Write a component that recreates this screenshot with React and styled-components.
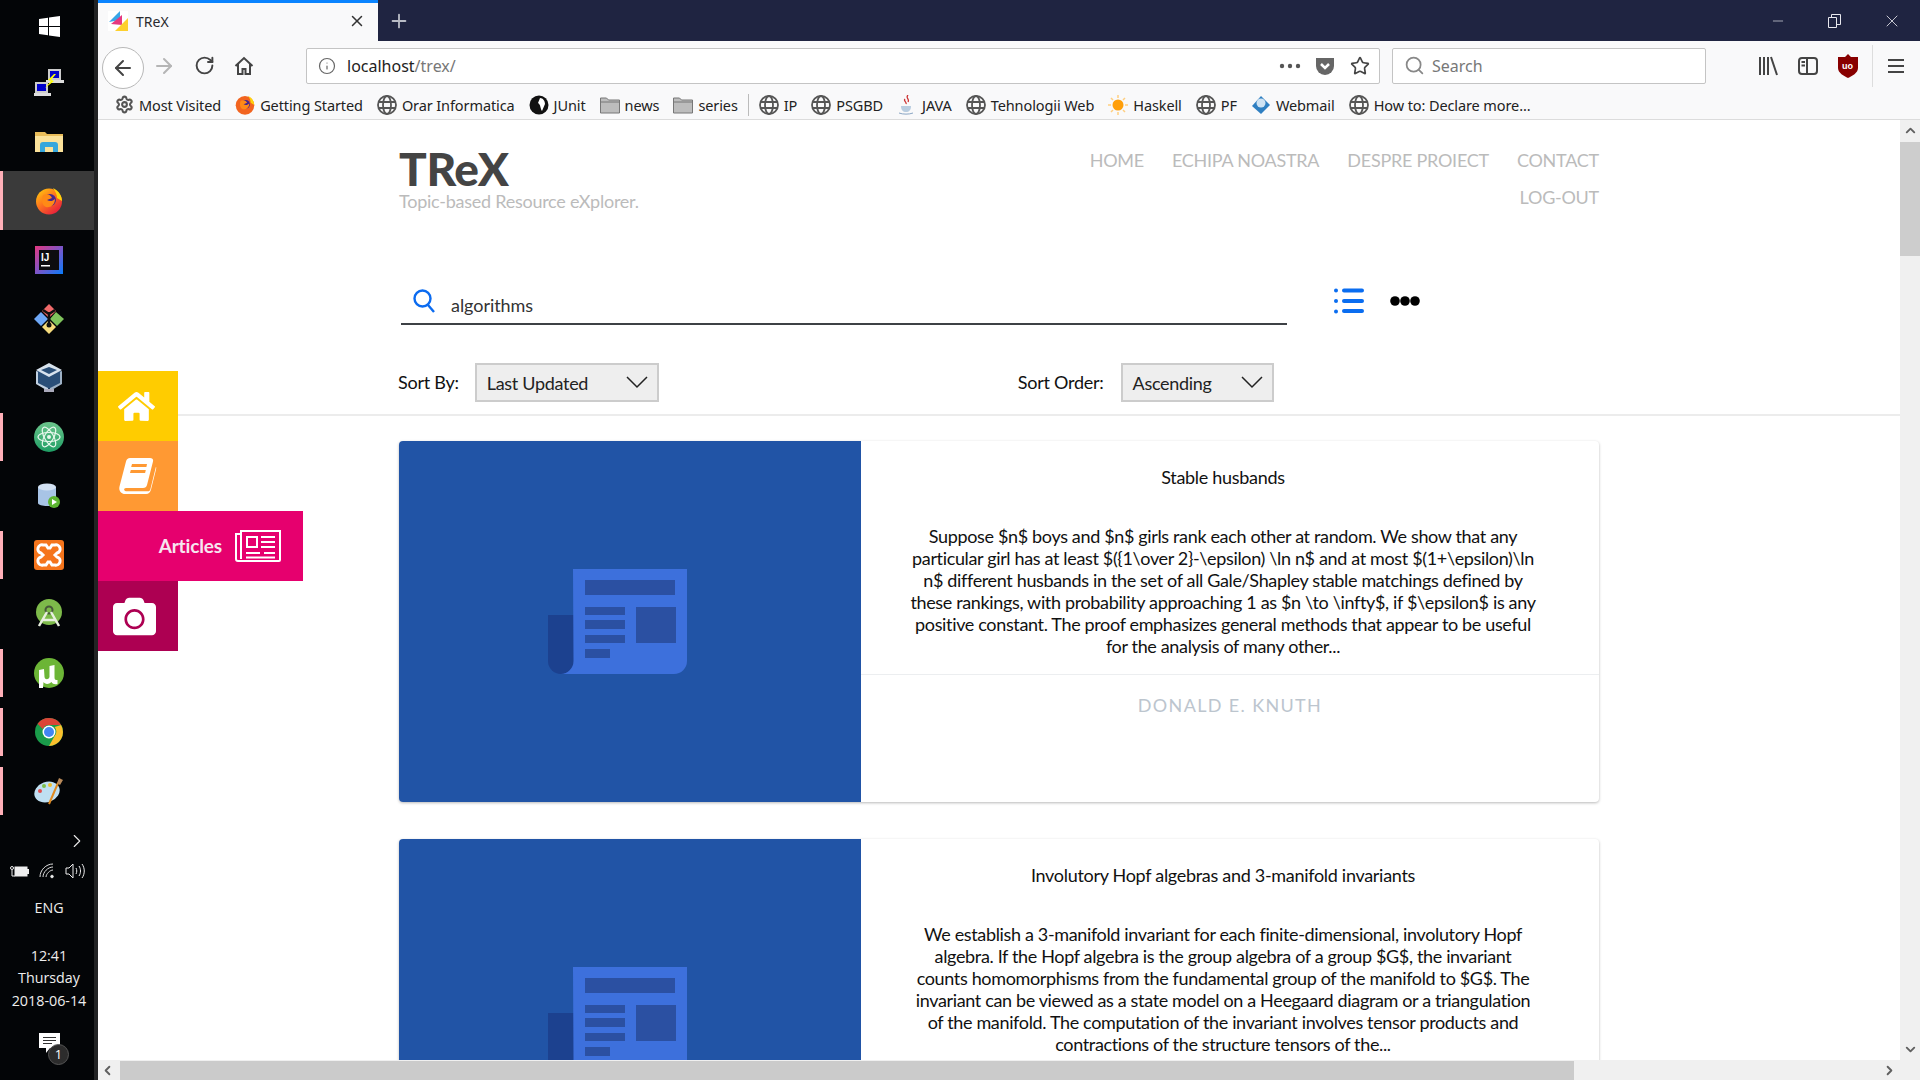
import React from 'react';
import styled, { createGlobalStyle } from 'styled-components';
import { FaHome, FaCamera } from 'react-icons/fa';
import { ArrowLeft, ArrowRight, RotateCw, Info, Star, Search, Minus, X, Plus, Settings, ChevronRight, ChevronDown, ChevronLeft, ChevronUp } from 'lucide-react';

const Global = createGlobalStyle`
  html, body { margin: 0; padding: 0; background: #000; overflow: hidden; }
  * { box-sizing: border-box; }
  #root { width: 1920px; height: 1080px; }
`;

const Desktop = styled.div`
  width: 1920px; height: 1080px; display: flex; overflow: hidden;
  font-family: Lato, "Liberation Sans", sans-serif;
`;

/* ---------- Windows taskbar ---------- */
const Taskbar = styled.aside`
  width: 98px; height: 1080px; flex: none; background: #030507;
  border-right: 4px solid #222324; display: flex; flex-direction: column; align-items: stretch;
`;
const Slot = styled.div`
  height: ${p => p.$h || 59}px; flex: none; display: flex; align-items: center; justify-content: center;
  position: relative; padding-left: 4px; background: ${p => (p.$active ? '#3a3a3a' : 'transparent')};
  ${p => p.$open ? `&::before { content: ''; position: absolute; left: 0; top: 6px; bottom: 5px; width: 3px; background: #ffb0b8; }` : ''}
  ${p => p.$active ? `&::before { top: 0; bottom: 0; }` : ''}
`;
const TrayChevron = styled.div`
  height: 22px; margin-top: 10px; display: flex; justify-content: flex-end; padding-right: 6px; color: #e8e8e8;
`;
const Tray = styled.div`
  display: flex; align-items: center; justify-content: center; gap: 10px; height: 24px; margin-top: 7px; color: #e8e8e8;
`;
const TrayText = styled.div`
  font-family: "Open Sans", "Noto Sans", sans-serif; font-size: 14.3px; color: #eee; text-align: center; padding-left: 4px;
  line-height: 22.5px; margin-top: ${p => p.$mt || 0}px; white-space: nowrap;
`;
const Notif = styled.div`
  margin-top: 21px; height: 36px; position: relative; display: flex; justify-content: center; padding-left: 4px;
`;
const NotifBadge = styled.span`
  position: absolute; left: 48px; top: 11px; width: 21px; height: 21px; border-radius: 50%;
  background: #2c2c2c; border: 1px solid #555; color: #fff; font: 13px/19px "Open Sans", sans-serif; text-align: center;
`;

/* ---------- Browser chrome ---------- */
const Browser = styled.div`
  width: 1822px; height: 1080px; flex: none; display: flex; flex-direction: column; background: #fff;
`;
const TitleBar = styled.div`
  height: 41px; flex: none; background: #1f2441; display: flex; align-items: stretch;
`;
const Tab = styled.div`
  width: 280px; background: #f9f9fa; border-top: 3px solid #0a84ff; display: flex; align-items: center;
  padding: 0 12px 2px 10px; color: #333; font-family: "Noto Sans", sans-serif; font-size: 14px;
`;
const TabTitle = styled.span` margin-left: 8px; flex: 1; color: #2a2a2e; `;
const NewTab = styled.div`
  width: 42px; display: flex; align-items: center; justify-content: center; color: #b9bcc6;
`;
const WinControls = styled.div`
  margin-left: auto; display: flex; align-items: center; color: #e8e8ee;
`;
const WinBtn = styled.div`
  width: 57px; display: flex; justify-content: center; align-items: center;
`;
const NavBar = styled.div`
  height: 49px; flex: none; background: #f9f9fa; display: flex; align-items: center; padding-left: 4px;
`;
const BackCircle = styled.div`
  width: 42px; height: 42px; border-radius: 50%; border: 1px solid #b8b8b8; background: #fff; flex: none;
  display: flex; align-items: center; justify-content: center; color: #444; margin-top: 4px;
`;
const NavBtn = styled.div`
  width: 40px; display: flex; justify-content: center; flex: none; color: ${p => p.$dim ? '#b5b5b5' : '#444'};
`;
const UrlBox = styled.div`
  height: 36px; background: #fff; border: 1px solid #c4c4c4; border-radius: 2px; display: flex; align-items: center;
  flex: none; width: ${p => p.$w}px; margin-left: ${p => p.$ml || 0}px; padding: 0 2px 0 11px;
  font-family: "Noto Sans", sans-serif; font-size: 16px; color: #222;
`;
const UrlText = styled.span` margin-left: 11px; flex: 1; i { font-style: normal; color: #777; } `;
const UrlIcon = styled.span` width: ${p => p.$w || 35}px; display: flex; justify-content: center; color: #555; `;
const Placeholder = styled.span` color: #777; margin-left: 7px; `;
const ToolIcons = styled.div`
  display: flex; align-items: center; margin-left: 42px; color: #444;
`;
const ToolIcon = styled.div` width: 40px; display: flex; justify-content: center; `;
const ToolSep = styled.div` width: 1px; height: 42px; background: #ddd; margin: 0 3px 0 4px; `;
const Bookmarks = styled.div`
  height: 30px; flex: none; background: #f9f9fa; border-bottom: 1px solid #dcdcdc; display: flex; align-items: center;
  padding-left: 17px; font-family: "Noto Sans", sans-serif; font-size: 14.5px; color: #1c1c1c;
`;
const Mark = styled.div`
  display: flex; align-items: center; gap: 5px; margin-right: ${p => p.$mr ?? 14}px; white-space: nowrap; letter-spacing: -.1px; color: #222;
`;
const MarkSep = styled.div` width: 1px; height: 22px; background: #bbb; margin: 0 10px 0 0; `;

/* ---------- Page ---------- */
const Viewport = styled.div` flex: 1; display: flex; min-height: 0; `;
const Page = styled.main`
  flex: 1; position: relative; overflow: hidden; background: #fff; min-width: 0;
`;
const Header = styled.header`
  padding-left: 301px; width: 1501px; height: 169px; display: flex; justify-content: space-between; align-items: flex-start;
`;
const Brand = styled.div` padding-top: 27px; `;
const Logo = styled.h1`
  margin: 0; font-size: 46px; line-height: 44px; font-weight: 900; color: #444; letter-spacing: -.4px;
`;
const Tagline = styled.p`
  margin: 0; font-size: 18px; line-height: 21px; color: #bbb; letter-spacing: -.25px;
`;
const Nav = styled.nav`
  width: 520px; display: flex; flex-wrap: wrap; justify-content: flex-end; column-gap: 28px; padding-top: 22px;
`;
const NavLink = styled.a`
  font-size: 18px; line-height: 37px; color: #bbb; letter-spacing: -.25px; text-transform: uppercase;
`;
const SearchRow = styled.div`
  padding-left: 303px; display: flex; align-items: flex-start; height: 74px;
`;
const SearchField = styled.div`
  width: 886px; height: 36px; border-bottom: 2px solid #3d4145; display: flex; align-items: flex-start; padding-left: 12px;
  color: #0b6bf0;
`;
const SearchValue = styled.span`
  margin-left: 16px; padding-top: 5px; font-size: 18px; color: #333; letter-spacing: -.05px;
`;
const ListBtn = styled.div` margin-left: 47px; margin-top: -1px; `;
const DotsBtn = styled.div` margin-left: 26px; margin-top: 1px; `;
const SortRow = styled.div`
  margin-left: 0; padding: 0 0 13px 300px; width: 100%; height: 53px; border-bottom: 2px solid #ececec; display: flex; align-items: flex-start;
`;
const SortLabel = styled.span`
  font-size: 18px; line-height: 39px; color: #111; letter-spacing: -.25px; margin-left: ${p => p.$ml || 0}px;
`;
const Select = styled.div`
  width: ${p => p.$w}px; height: 39px; margin-left: ${p => p.$ml}px; background: #eee; border: 2px solid #ccc;
  display: flex; align-items: center; justify-content: space-between; padding: 0 9px 0 ${p => p.$pl}px;
  font-size: 18px; color: #222; letter-spacing: -.3px;
`;
const List = styled.div`
  padding: 25px 0 0 301px; width: 1501px; display: flex; flex-direction: column; gap: 37px;
`;
const Card = styled.article`
  height: 361px; flex: none; display: flex; background: #fff; border-radius: 4px; overflow: hidden;
  box-shadow: 0 1px 3px rgba(0,0,0,.28);
`;
const Thumb = styled.div`
  width: 462px; flex: none; background: #2154a6; display: flex; align-items: center; justify-content: center; padding-right: 25px;
`;
const CardBody = styled.div` flex: 1; display: flex; flex-direction: column; min-width: 0; `;
const CardMain = styled.div`
  height: 234px; border-bottom: 1px solid #eceef0; padding: 25px 61px 0 47px; text-align: center; color: #111;
`;
const CardTitle = styled.h3`
  margin: 0; font-size: 18px; line-height: 22px; font-weight: 400; letter-spacing: -.3px;
`;
const CardText = styled.p`
  margin: 37px 0 0; font-size: 18px; line-height: 22px; letter-spacing: -.35px;
`;
const Author = styled.div`
  padding: 19px 0 0 0; font-size: 18px; line-height: 22px; text-align: center; color: #bcc5ce; letter-spacing: 1.35px;
`;
const Rail = styled.nav`
  position: absolute; left: 0; top: 251px; display: flex; flex-direction: column; align-items: flex-start;
`;
const RailItem = styled.div`
  height: 70px; width: ${p => p.$w || 80}px; background: ${p => p.$bg}; color: #fff; display: flex; align-items: center;
  justify-content: ${p => p.$open ? 'flex-end' : 'center'}; padding-right: ${p => p.$pr ?? 0}px; gap: 13px;
`;
const RailLabel = styled.span` font-size: 19px; font-weight: 700; color: #f6e6f0; letter-spacing: -.15px; margin-bottom: 1px; `;
const VScroll = styled.div`
  width: 20px; flex: none; background: #f0f0f0; display: flex; flex-direction: column; align-items: center; color: #606060;
`;
const Thumbbar = styled.div`
  width: 20px; height: 114px; background: #cdcdcd; margin-top: 1px;
`;
const ScrollArrow = styled.div`
  height: 21px; display: flex; align-items: center; justify-content: center; flex: none; margin-top: ${p => p.$auto ? 'auto' : 0};
`;
const HScroll = styled.div`
  height: 20px; flex: none; background: #f0f0f0; display: flex; align-items: center; color: #606060;
`;
const HArrow = styled.div`
  width: 22px; flex: none; display: flex; align-items: center; justify-content: center; padding-right: 4px; margin-left: ${p => p.$auto ? 'auto' : 0};
`;
const HThumb = styled.div` width: 1454px; height: 19px; background: #cbcbcb; `;
const Corner = styled.div` width: 18px; `;

/* ---------- Drawn icons ---------- */
const Win = () => <svg width="21" height="21" viewBox="0 0 21 21"><path fill="#fff" d="M0 3l9-1.3V10H0zM10 1.5L21 0v10H10zM0 11h9v8.3L0 18zM10 11h11v10l-11-1.5z"/></svg>;
const Putty = () => <svg width="30" height="30" viewBox="0 0 30 30"><rect x="14" y="1" width="13" height="11" fill="#ccc"/><rect x="16" y="3" width="9" height="7" fill="#00c"/><rect x="12" y="12" width="18" height="3" fill="#ddd"/><rect x="1" y="14" width="13" height="11" fill="#ccc"/><rect x="3" y="16" width="9" height="7" fill="#00c"/><rect x="0" y="25" width="17" height="3" fill="#ddd"/><path fill="#ff0" d="M20 6l-6 6 3 1-6 7 9-7-3-1 5-6z"/></svg>;
const Folder = () => <svg width="28" height="24" viewBox="0 0 28 24"><path fill="#e9bd5a" d="M0 2h10l2 2h16v4H0z"/><path fill="#fbe29a" d="M0 6h28v16H0z"/><path fill="#36a7dc" d="M5 22v-7q0-3 3-3h12q3 0 3 3v7h-5v-5h-8v5z"/></svg>;
const Firefox = () => <svg width="28" height="28" viewBox="0 0 28 28"><defs><linearGradient id="ffg" x1="0" y1="0" x2=".8" y2="1"><stop offset="0" stopColor="#ffd30b"/><stop offset=".45" stopColor="#ff7b1c"/><stop offset="1" stopColor="#e6173f"/></linearGradient></defs><circle cx="14" cy="14.500" r="13" fill="url(#ffg)"/><path fill="#ffd30b" d="M18 1c6 3 9 8 9 13l-5-3c0-4-2-7-4-10z"/><circle cx="15" cy="13" r="6" fill="#45278d"/><path fill="#ff8a16" d="M8 8c4-2 8 0 9 3l-5 2c3 2 6 1 8-1 0 6-5 9-9 8C7 19 6 12 8 8z"/></svg>;
const Intellij = () => <svg width="28" height="28" viewBox="0 0 28 28"><defs><linearGradient id="ijg" x1="0" y1="0" x2="1" y2="1"><stop offset="0" stopColor="#e5387f"/><stop offset=".5" stopColor="#7d55c7"/><stop offset="1" stopColor="#087cfa"/></linearGradient></defs><rect width="28" height="28" fill="url(#ijg)"/><rect x="4" y="4" width="20" height="20" fill="#0d0d0f"/><text x="6" y="15" fontFamily="Liberation Sans" fontWeight="700" fontSize="10" fill="#fff">IJ</text><rect x="6" y="19" width="9" height="1.500" fill="#fff"/></svg>;
const GitExt = () => <svg width="30" height="30" viewBox="0 0 30 30"><path fill="#f06a6a" d="M15 0l7 7-7 7-7-7z"/><path fill="#7fc45c" d="M22 8l8 7-7 7-7-7z"/><path fill="#f5db7c" d="M15 16l7 7-7 7-7-7z"/><path fill="#6ea8f7" d="M7 8l7 7-7 7-7-7z"/><path stroke="#111" strokeWidth="2.500" fill="none" d="M15 20V8M9 6l6 4 6-4"/><circle cx="15" cy="21" r="2.500" fill="#111"/></svg>;
const VBox = () => <svg width="26" height="30" viewBox="0 0 26 30"><path fill="#2a4f78" d="M13 2L25 8v12l-12 6L1 20V8z"/><path fill="#d8e3ee" d="M13 0l13 7-13 7L0 7zM13 4L5 7l8 4 8-4z"/><path fill="#c2d2e2" d="M0 8l2 .8V20l10 5v3L0 21z"/><path fill="#9eb2c6" d="M26 8l-2 .8V20l-10 5v3l12-7z"/><path fill="#aab" d="M8 26h10v3H8z"/></svg>;
const AtomIcon = () => <svg width="30" height="30" viewBox="0 0 30 30"><defs><linearGradient id="atg" x1="0" y1="0" x2="0" y2="1"><stop offset="0" stopColor="#6cc58c"/><stop offset="1" stopColor="#1e9e64"/></linearGradient></defs><circle cx="15" cy="15" r="15" fill="url(#atg)"/><g fill="none" stroke="#e6f7ec" strokeWidth="1.200"><ellipse cx="15" cy="15" rx="11" ry="4.500"/><ellipse cx="15" cy="15" rx="11" ry="4.500" transform="rotate(60 15 15)"/><ellipse cx="15" cy="15" rx="11" ry="4.500" transform="rotate(120 15 15)"/></g><circle cx="15" cy="15" r="2" fill="#e6f7ec"/></svg>;
const DbIcon = () => <svg width="24" height="28" viewBox="0 0 24 26"><path fill="#a8c4e6" d="M1 4v16c0 4 18 4 18 0V4z"/><ellipse cx="10" cy="4" rx="9" ry="3.500" fill="#d4e3f4"/><circle cx="17" cy="19" r="6" fill="#5cb531"/><path fill="#fff" d="M15 16l5 3-5 3z"/></svg>;
const Xampp = () => <svg width="30" height="30" viewBox="0 0 30 30"><rect width="30" height="30" rx="3" fill="#f5751c"/><path fill="none" stroke="#fff" strokeWidth="3" d="M9 5h3l2 3h2l2-3h3a4 4 0 0 1 2 8l-2 2 2 2a4 4 0 0 1-2 8h-3l-2-3h-2l-2 3H9a4 4 0 0 1-2-8l2-2-2-2a4 4 0 0 1 2-8z"/></svg>;
const AndroidS = () => <svg width="28" height="30" viewBox="0 0 28 30"><circle cx="14" cy="13" r="13" fill="#7dba4a"/><circle cx="14" cy="11" r="3.500" fill="none" stroke="#47593a" strokeWidth="2"/><path stroke="#e8f0df" strokeWidth="2.500" fill="none" d="M12 13L4 27M16 13l8 14M7 21h14"/></svg>;
const Torrent = () => <svg width="30" height="30" viewBox="0 0 30 30"><circle cx="15" cy="15" r="15" fill="#6cb536"/><path fill="#fff" d="M5 12l5-1 .5 8c.5 3 4 3 5 0V8l5-1v12c0 3 1 3 3 3v4c-3 .5-5 0-6-2-3 3-7 2-8 0l-.5 6H5z"/></svg>;
const Chrome = () => <svg width="28" height="28" viewBox="0 0 28 28"><circle cx="14" cy="14" r="14" fill="#1a9c4a"/><path fill="#db4437" d="M14 0a14 14 0 0 1 12.100 7H14a7 7 0 0 0-6.300 4L2.600 5.800A14 14 0 0 1 14 0z"/><path fill="#fbc02d" d="M26.100 7A14 14 0 0 1 14 28l5.900-10.500A7 7 0 0 0 19.600 9z"/><circle cx="14" cy="14" r="6.500" fill="#fff"/><circle cx="14" cy="14" r="5" fill="#4285f4"/></svg>;
const Palette = () => <svg width="30" height="28" viewBox="0 0 30 28"><ellipse cx="13" cy="15" rx="13" ry="10" fill="#bfe0f2" transform="rotate(-20 13 15)"/><circle cx="6" cy="14" r="2" fill="#e25050"/><circle cx="10" cy="9" r="2" fill="#7cc04a"/><circle cx="16" cy="8" r="2" fill="#f0c030"/><path stroke="#e08a20" strokeWidth="2" d="M15 27L24 6"/><path fill="#b98a5a" d="M23 6l2-5 4 2-3 5z"/></svg>;
const Battery = () => <svg width="20" height="14" viewBox="0 0 20 14" fill="none" stroke="#eee"><rect x="6" y="3" width="12" height="9" fill="#eee"/><rect x="18.500" y="5.500" width="1" height="4" fill="#eee"/><circle cx="3" cy="4" r="1.500"/><path d="M3 6v6h3"/></svg>;
const Wifi = () => <svg width="16" height="16" viewBox="0 0 16 16" fill="none" stroke="#ddd"><path d="M1 14C1 7 7 1 14 1M4 14c0-5 5-10 10-10M7 14c0-3 4-7 7-7"/><circle cx="13" cy="13.500" r="1.300" fill="#eee"/></svg>;
const Volume = () => <svg width="20" height="16" viewBox="0 0 20 16" fill="none" stroke="#eee"><path d="M1 5h3l4-4v14l-4-4H1zM11 5c1 2 1 4 0 6M14 3c2 3 2 7 0 10M17 1c3 4 3 10 0 14"/></svg>;
const Bubble = () => <svg width="21" height="20" viewBox="0 0 21 20"><path fill="#fff" d="M0 0h21v15H11l-4 5v-5H0z"/><path stroke="#333" d="M4 4.500h13M4 7.500h13M4 10.500h9"/></svg>;

const Favicon = () => <svg width="20" height="20" viewBox="0 0 20 20"><rect width="20" height="20" fill="#fff"/><path fill="#37a5e8" d="M1 11L12 0v9z"/><path fill="#e5397f" d="M3 13L14 4v10z"/><path fill="#fdd02e" d="M7 20L20 7v13z"/></svg>;
const HomeOutline = () => <svg width="20" height="20" viewBox="0 0 20 20" fill="none" stroke="#444" strokeWidth="2"><path d="M1.500 10L10 2l8.500 8M4 8v10h4.500v-5h3v5H16V8"/></svg>;
const Pocket = () => <svg width="20" height="20" viewBox="0 0 20 20"><path fill="#666" d="M1 2h18v8a9 9 0 0 1-18 0z"/><path fill="none" stroke="#fff" strokeWidth="2.500" d="M6 8l4 4 4-4"/></svg>;
const Dots = () => <svg width="22" height="6" viewBox="0 0 22 6"><g fill="#555"><circle cx="3" cy="3" r="2.200"/><circle cx="11" cy="3" r="2.200"/><circle cx="19" cy="3" r="2.200"/></g></svg>;
const Library = () => <svg width="20" height="20" viewBox="0 0 20 20" stroke="#444" strokeWidth="2" fill="none"><path d="M2 1v18M6 1v18M10 1v18M13 1l6 18"/></svg>;
const SidebarIcon = () => <svg width="20" height="20" viewBox="0 0 20 20" fill="none" stroke="#444" strokeWidth="2"><rect x="1" y="2" width="18" height="16" rx="3"/><path d="M9 2v16M3.500 6H7M3.500 9.500H7"/></svg>;
const UBlock = () => <svg width="20" height="24" viewBox="0 0 20 24"><path fill="#800" d="M10 0l3 3h7v11c0 5-6 8-10 10C6 22 0 19 0 14V3h7z"/><text x="4" y="15" fontSize="9" fontWeight="700" fontFamily="Liberation Sans" fill="#fff">uo</text></svg>;
const Burger = () => <svg width="16" height="16" viewBox="0 0 16 16" stroke="#444" strokeWidth="2"><path d="M0 2h16M0 8h16M0 14h16"/></svg>;
const Globe = () => <svg width="20" height="20" viewBox="0 0 20 20" fill="none" stroke="#555" strokeWidth="1.800"><circle cx="10" cy="10" r="9"/><ellipse cx="10" cy="10" rx="4" ry="9"/><path d="M1.500 7h17M1.500 13h17"/></svg>;
const FxSmall = () => <svg width="20" height="20" viewBox="0 0 28 28"><circle cx="14" cy="14.500" r="13" fill="#f2641f"/><path fill="#ffd30b" d="M18 1c6 3 9 8 9 13l-5-3c0-4-2-7-4-10z"/><circle cx="15" cy="13" r="6" fill="#45278d"/><path fill="#ff8a16" d="M8 8c4-2 8 0 9 3l-5 2c3 2 6 1 8-1 0 6-5 9-9 8C7 19 6 12 8 8z"/></svg>;
const JUnitI = () => <svg width="20" height="20" viewBox="0 0 20 20"><circle cx="10" cy="10" r="9.500" fill="#111"/><path fill="#fff" d="M11 3c3 0 5 3 5 6l-3 7c-2-3-1-6-4-8z"/></svg>;
const FolderS = () => <svg width="20" height="20" viewBox="0 0 20 20"><path fill="#bdbdbd" stroke="#777" d="M.5 3h6l2 2h11v13H.5z"/><path stroke="#777" d="M.5 7h19"/></svg>;
const Java = () => <svg width="20" height="20" viewBox="0 0 20 20" fill="none"><path stroke="#c33" strokeWidth="1.300" d="M11 0c-3 3 2 4 0 7M8 4c-2 2 2 3 1 5"/><path fill="#b9cde0" d="M4 11h10c0 4-2 6-5 6s-5-2-5-6z"/><path stroke="#8aa6c4" d="M2 18c4 1.500 10 1.500 14 0"/></svg>;
const Sun = () => <svg width="20" height="20" viewBox="0 0 20 20"><circle cx="10" cy="10" r="5.500" fill="#ff9f0a"/><g stroke="#ffcf80" strokeWidth="1.500"><path d="M10 0v3M10 17v3M0 10h3M17 10h3M3 3l2 2M15 15l2 2M3 17l2-2M15 5l2-2"/></g></svg>;
const Webm = () => <svg width="20" height="20" viewBox="0 0 20 20"><path fill="#2f7fc1" d="M10 1l9 9-6 6-3 3-9-8z"/><circle cx="10" cy="8" r="4.500" fill="#cfe3f3"/></svg>;

const BookIcon = () => <svg width="38" height="36" viewBox="0 0 38 36"><path fill="#fff" d="M11 0h20c2.500 0 3.500 1.500 3 3.500L28 27c-.5 2-1.800 3-4 3H7c-2.500 0-2.500 3.200 0 3.200h22c1.200 0 2-.7 2.300-1.800L37 8.500c.3.800.3 1.800 0 3l-5 20c-.6 2.600-2.200 4.500-5 4.500H6c-4 0-6.500-3.500-5.500-7.500L7 3.500C7.500 1.500 9 0 11 0z"/><path fill="#ff9933" d="M13 6h15l-.6 3H12.200zM11.800 12h15l-.7 3H11z"/></svg>;
const PaperIcon = () => <svg width="46" height="32" viewBox="0 0 46 32" fill="none" stroke="#fff" strokeWidth="2"><path d="M6 3V1h39v29a1 1 0 0 1-1 1H3a2 2 0 0 1-2-2V4h5v25"/><rect x="12" y="7" width="10" height="10"/><path d="M26 7h14M26 12h14M26 17h14M11 23h14M29 23h11M11 27.500h29"/></svg>;
const Chevron = () => <svg width="22" height="13" viewBox="0 0 22 13" fill="none" stroke="#222" strokeWidth="1.500"><path d="M1 1l10 10L21 1"/></svg>;
const ListIcon = () => <svg width="30" height="26" viewBox="0 0 30 26" fill="#0a6df0"><circle cx="2" cy="2.500" r="2"/><circle cx="2" cy="13" r="2"/><circle cx="2" cy="23.500" r="2"/><rect x="8" y="0.500" width="22" height="4" rx="2"/><rect x="8" y="11" width="22" height="4" rx="2"/><rect x="8" y="21" width="22" height="4" rx="2"/></svg>;
const DotsIcon = () => <svg width="30" height="10" viewBox="0 0 30 10" fill="#000"><circle cx="5" cy="5" r="4.800"/><circle cx="15" cy="5" r="4.800"/><circle cx="25" cy="5" r="4.800"/></svg>;
const SearchGlass = () => <svg width="22" height="24" viewBox="0 0 22 24" fill="none" stroke="#0b6bf0" strokeWidth="2.400"><circle cx="9.500" cy="9.500" r="8"/><path d="M15 16l6 7"/></svg>;
const ArticleArt = () => <svg width="139" height="105" viewBox="0 0 139 105"><path fill="#1c418f" d="M0 46h26v46a13 13 0 0 1-26 0z"/><path fill="#3d70dc" d="M25 0h114v92a13 13 0 0 1-13 13H13a13 13 0 0 0 12.500-13z"/><g fill="#2b50a2"><rect x="37" y="11" width="90" height="15"/><rect x="37" y="38" width="40" height="8"/><rect x="37" y="51" width="40" height="9"/><rect x="37" y="66" width="40" height="8"/><rect x="37" y="80" width="25" height="9"/><rect x="88" y="38" width="40" height="36"/></g></svg>;

const marks = [
  { icon: <Settings size={19} color="#555" strokeWidth={2.6} />, label: 'Most Visited' },
  { icon: <FxSmall />, label: 'Getting Started' },
  { icon: <Globe />, label: 'Orar Informatica' },
  { icon: <JUnitI />, label: 'JUnit' },
  { icon: <FolderS />, label: 'news' },
  { icon: <FolderS />, label: 'series', mr: 10 },
  'sep',
  { icon: <Globe />, label: 'IP' },
  { icon: <Globe />, label: 'PSGBD' },
  { icon: <Java />, label: 'JAVA' },
  { icon: <Globe />, label: 'Tehnologii Web' },
  { icon: <Sun />, label: 'Haskell' },
  { icon: <Globe />, label: 'PF' },
  { icon: <Webm />, label: 'Webmail' },
  { icon: <Globe />, label: 'How to: Declare more...' },
];

const slots = [
  { c: <Win /> }, { c: <Putty /> }, { c: <Folder /> },
  { c: <Firefox />, active: true, open: true },
  { c: <Intellij /> }, { c: <GitExt /> }, { c: <VBox /> },
  { c: <AtomIcon />, open: true }, { c: <DbIcon /> },
  { c: <Xampp />, open: true }, { c: <AndroidS /> },
  { c: <Torrent />, open: true }, { c: <Chrome />, open: true }, { c: <Palette />, open: true },
];

const articles = [
  {
    title: 'Stable husbands',
    text: 'Suppose $n$ boys and $n$ girls rank each other at random. We show that any particular girl has at least $({1\\over 2}-\\epsilon) \\ln n$ and at most $(1+\\epsilon)\\ln n$ different husbands in the set of all Gale/Shapley stable matchings defined by these rankings, with probability approaching 1 as $n \\to \\infty$, if $\\epsilon$ is any positive constant. The proof emphasizes general methods that appear to be useful for the analysis of many other...',
    author: 'DONALD E. KNUTH',
  },
  {
    title: 'Involutory Hopf algebras and 3-manifold invariants',
    text: 'We establish a 3-manifold invariant for each finite-dimensional, involutory Hopf algebra. If the Hopf algebra is the group algebra of a group $G$, the invariant counts homomorphisms from the fundamental group of the manifold to $G$. The invariant can be viewed as a state model on a Heegaard diagram or a triangulation of the manifold. The computation of the invariant involves tensor products and contractions of the structure tensors of the...',
    author: '',
  },
];

export default function App() {
  return (
    <Desktop>
      <Global />
      <Taskbar>
        {slots.map((s, i) => (
          <Slot key={i} $active={s.active} $open={s.open} $h={i === 0 ? 53 : 59}>{s.c}</Slot>
        ))}
        <TrayChevron><ChevronRight size={22} strokeWidth={1.2} /></TrayChevron>
        <Tray><Battery /><Wifi /><Volume /></Tray>
        <TrayText $mt={14}>ENG</TrayText>
        <TrayText $mt={25}>12:41<br />Thursday<br />2018-06-14</TrayText>
        <Notif><Bubble /><NotifBadge>1</NotifBadge></Notif>
      </Taskbar>
      <Browser>
        <TitleBar>
          <Tab><Favicon /><TabTitle>TReX</TabTitle><X size={18} color="#333" /></Tab>
          <NewTab><Plus size={22} strokeWidth={2} /></NewTab>
          <WinControls>
            <WinBtn><Minus size={16} strokeWidth={1} /></WinBtn>
            <WinBtn><svg width="13" height="14" viewBox="0 0 13 14" fill="none" stroke="#e8e8ee"><path d="M.5 3.500h8v10h-8zM3.500 3V.5h9v10H9"/></svg></WinBtn>
            <WinBtn><X size={20} strokeWidth={1} /></WinBtn>
          </WinControls>
        </TitleBar>
        <NavBar>
          <BackCircle><ArrowLeft size={24} strokeWidth={2} /></BackCircle>
          <NavBtn $dim><ArrowRight size={24} strokeWidth={2} /></NavBtn>
          <NavBtn><RotateCw size={21} strokeWidth={2.2} /></NavBtn>
          <NavBtn><HomeOutline /></NavBtn>
          <UrlBox $w={1074} $ml={42}>
            <Info size={18} color="#666" strokeWidth={1.6} />
            <UrlText>localhost<i>/trex/</i></UrlText>
            <UrlIcon><Dots /></UrlIcon>
            <UrlIcon><Pocket /></UrlIcon>
            <UrlIcon><Star size={20} strokeWidth={2} color="#444" /></UrlIcon>
          </UrlBox>
          <UrlBox $w={314} $ml={12}>
            <Search size={21} color="#888" strokeWidth={2} />
            <Placeholder>Search</Placeholder>
          </UrlBox>
          <ToolIcons>
            <ToolIcon><Library /></ToolIcon>
            <ToolIcon><SidebarIcon /></ToolIcon>
            <ToolIcon><UBlock /></ToolIcon>
            <ToolSep />
            <ToolIcon><Burger /></ToolIcon>
          </ToolIcons>
        </NavBar>
        <Bookmarks>
          {marks.map((m, i) => m === 'sep'
            ? <MarkSep key={i} />
            : <Mark key={i} $mr={m.mr}>{m.icon}<span>{m.label}</span></Mark>)}
        </Bookmarks>
        <Viewport>
          <Page>
            <Header>
              <Brand>
                <Logo>TReX</Logo>
                <Tagline>Topic-based Resource eXplorer.</Tagline>
              </Brand>
              <Nav>
                <NavLink>Home</NavLink>
                <NavLink>Echipa noastra</NavLink>
                <NavLink>Despre proiect</NavLink>
                <NavLink>Contact</NavLink>
                <NavLink>Log-out</NavLink>
              </Nav>
            </Header>
            <SearchRow>
              <SearchField><SearchGlass /><SearchValue>algorithms</SearchValue></SearchField>
              <ListBtn><ListIcon /></ListBtn>
              <DotsBtn><DotsIcon /></DotsBtn>
            </SearchRow>
            <SortRow>
              <SortLabel>Sort By:</SortLabel>
              <Select $w={184} $ml={16} $pl={10}>Last Updated<Chevron /></Select>
              <SortLabel $ml={359}>Sort Order:</SortLabel>
              <Select $w={153} $ml={17} $pl={10}>Ascending<Chevron /></Select>
            </SortRow>
            <List>
              {articles.map(a => (
                <Card key={a.title}>
                  <Thumb><ArticleArt /></Thumb>
                  <CardBody>
                    <CardMain>
                      <CardTitle>{a.title}</CardTitle>
                      <CardText>{a.text}</CardText>
                    </CardMain>
                    <Author>{a.author}</Author>
                  </CardBody>
                </Card>
              ))}
            </List>
            <Rail>
              <RailItem $bg="#ffcc00" $pr={3}><FaHome size={37} /></RailItem>
              <RailItem $bg="#ff9933" $pr={1}><BookIcon /></RailItem>
              <RailItem $bg="#e6006e" $w={205} $open $pr={22}><RailLabel>Articles</RailLabel><PaperIcon /></RailItem>
              <RailItem $bg="#ad0052" $pr={7}><FaCamera size={43} /></RailItem>
            </Rail>
          </Page>
          <VScroll>
            <ScrollArrow><ChevronUp size={15} strokeWidth={3} /></ScrollArrow>
            <Thumbbar />
            <ScrollArrow $auto><ChevronDown size={15} strokeWidth={3} /></ScrollArrow>
          </VScroll>
        </Viewport>
        <HScroll>
          <HArrow><ChevronLeft size={15} strokeWidth={3} /></HArrow>
          <HThumb />
          <HArrow $auto><ChevronRight size={15} strokeWidth={3} /></HArrow>
          <Corner />
        </HScroll>
      </Browser>
    </Desktop>
  );
}
